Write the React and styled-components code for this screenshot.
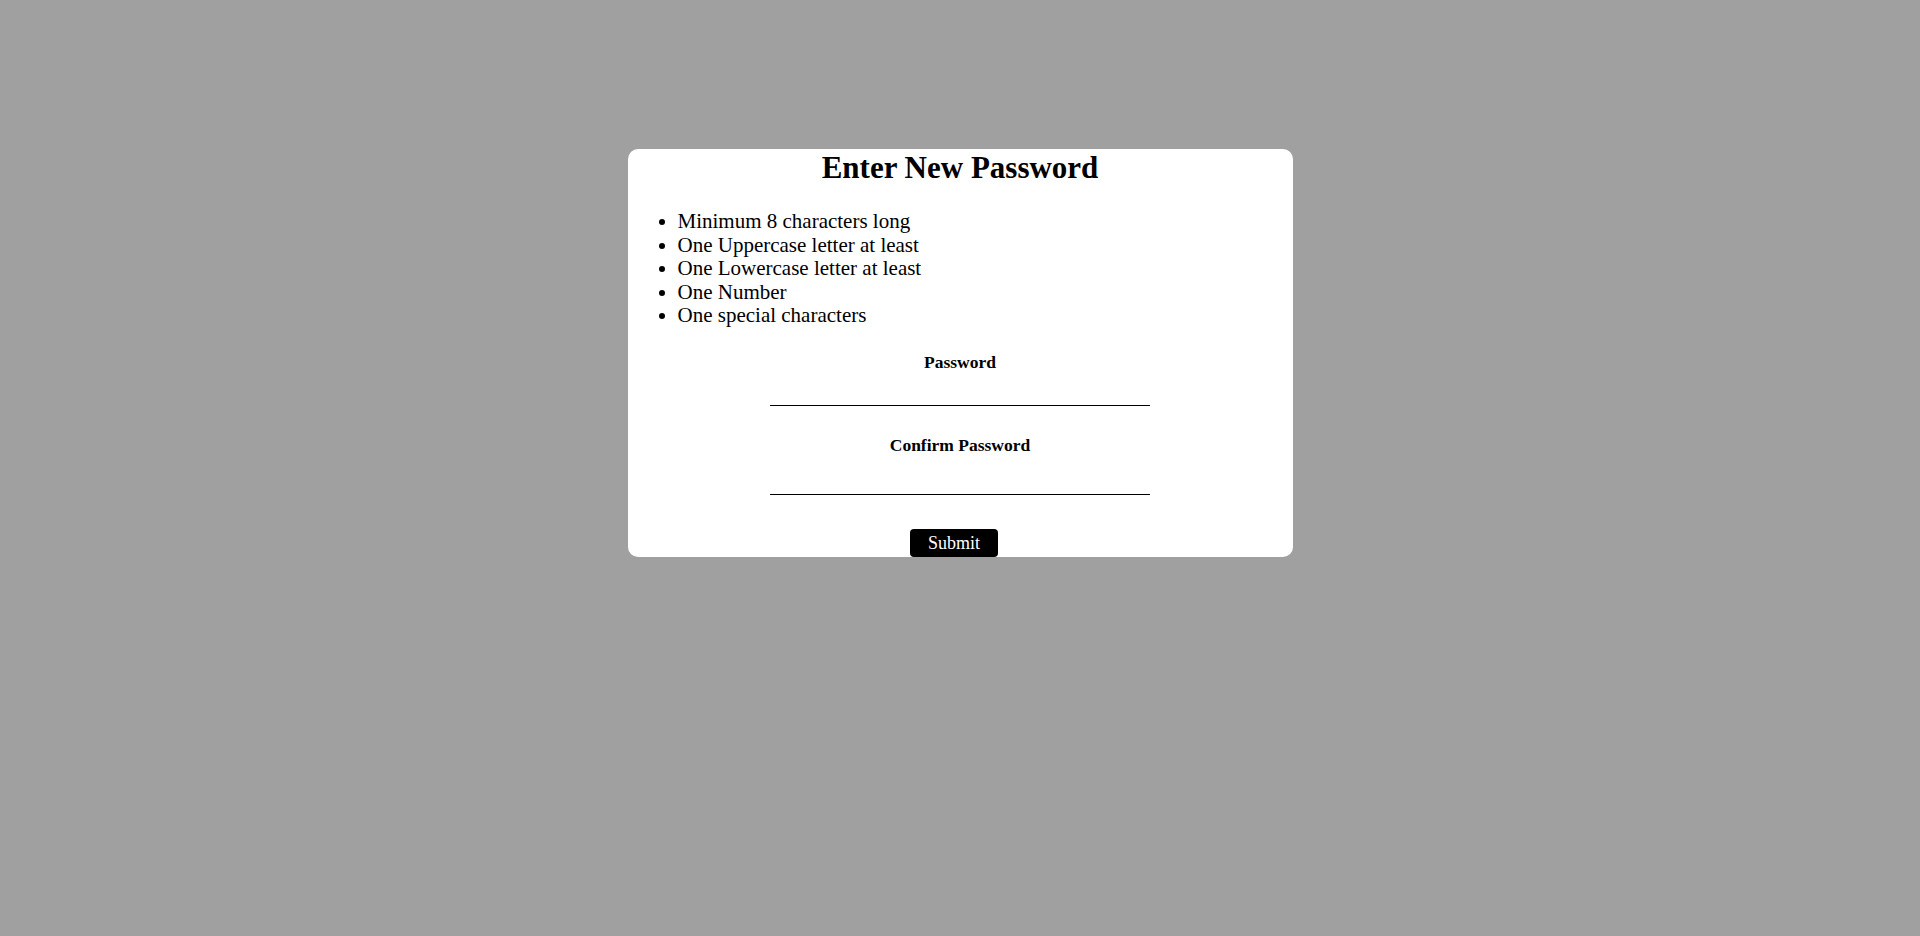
import styled, { createGlobalStyle } from 'styled-components';

const GlobalStyle = createGlobalStyle`
    html, body {
        margin: 0;
        padding: 0;
        background-color: #a0a0a0;
        font-family: "Liberation Serif", "Times New Roman", serif;
        color: #000;
    }
`;

const Page = styled.div`
    min-height: 936px;
    padding-top: 149px;
    box-sizing: border-box;
`;

const Card = styled.form`
    width: 665px;
    margin: 0 auto;
    padding: 1px 10px 0;
    box-sizing: border-box;
    background-color: #fff;
    border-radius: 10px;
    display: flex;
    flex-direction: column;
    overflow: hidden;
`;

const Title = styled.h1`
    margin: 0;
    font-size: 31px;
    line-height: 36px;
    font-weight: bold;
    text-align: center;
`;

const Rules = styled.ul`
    margin: 24.4px 0 0;
    padding-left: 40px;
    font-size: 21px;
    line-height: 23.4px;
`;

const Field = styled.div`
    display: flex;
    flex-direction: column;
    align-items: center;
    margin-top: ${(p) => p.$gap}px;
`;

const Label = styled.label`
    font-size: 17.5px;
    line-height: 20px;
    font-weight: bold;
`;

const Input = styled.input`
    width: 380px;
    height: 26px;
    margin-top: ${(p) => p.$offset}px;
    box-sizing: border-box;
    border: none;
    border-bottom: 1px solid #000;
    background: transparent;
    outline: none;
    font-family: inherit;
    font-size: 16px;
`;

const Actions = styled.div`
    display: flex;
    justify-content: center;
    margin-top: 34.2px;
`;

const SubmitButton = styled.button`
    width: 88px;
    height: 28px;
    margin-right: 12px;
    padding: 0;
    border: none;
    border-radius: 4px;
    background-color: #000;
    color: #fff;
    font-family: inherit;
    font-size: 18px;
    line-height: 28px;
    cursor: pointer;
`;

const rules = [
    'Minimum 8 characters long',
    'One Uppercase letter at least',
    'One Lowercase letter at least',
    'One Number',
    'One special characters',
];

const App = () => {
    const onSubmit = (e) => {
        e.preventDefault();
    };

    return (
        <>
            <GlobalStyle />
            <Page>
                <Card onSubmit={onSubmit}>
                    <Title>Enter New Password</Title>
                    <Rules>
                        {rules.map((rule) => (
                            <li key={rule}>{rule}</li>
                        ))}
                    </Rules>
                    <Field $gap={25}>
                        <Label htmlFor="password">Password</Label>
                        <Input id="password" type="password" $offset={8} />
                    </Field>
                    <Field $gap={28.5}>
                        <Label htmlFor="confirm">Confirm Password</Label>
                        <Input id="confirm" type="password" $offset={14} />
                    </Field>
                    <Actions>
                        <SubmitButton type="submit">Submit</SubmitButton>
                    </Actions>
                </Card>
            </Page>
        </>
    );
};

export default App;
